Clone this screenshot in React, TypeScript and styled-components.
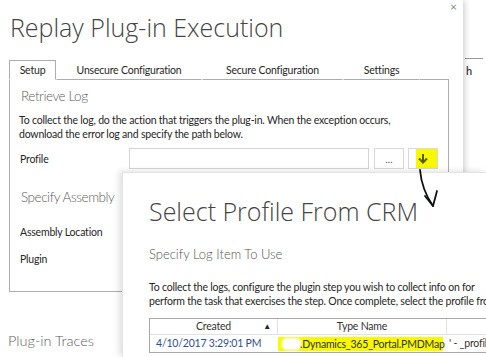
import React from "react";
import styled, { createGlobalStyle } from "styled-components";

const GlobalStyle = createGlobalStyle`
  html, body {
    margin: 0;
    padding: 0;
    background: #ffffff;
  }
  body {
    font-family: "Segoe UI", Lato, "Open Sans", sans-serif;
    color: #262626;
  }
`;

const headingFont = `"Segoe UI Light", "Open Sans", sans-serif`;
const lightFont = `"Segoe UI Light", Lato, sans-serif`;

interface TabDef {
  label: string;
  width: number;
  active?: boolean;
}

const tabs: TabDef[] = [
  { label: "Setup", width: 47, active: true },
  { label: "Unsecure Configuration", width: 146 },
  { label: "Secure Configuration", width: 141 },
  { label: "Settings", width: 77 },
];

export default function App() {
  return (
    <>
      <GlobalStyle />
      <Page>
        <MainDialog>
          <CloseX>×</CloseX>
          <Title>Replay Plug-in Execution</Title>

          <TabStrip>
            {tabs.map((t) => (
              <Tab key={t.label} $width={t.width} $active={t.active}>
                {t.label}
              </Tab>
            ))}
            <TabFiller />
          </TabStrip>

          <Panel>
            <SectionHeading>Retrieve Log</SectionHeading>
            <Paragraph>
              To collect the log, do the action that triggers the plug-in. When the exception occurs,
              <br />
              download the error log and specify the path below.
            </Paragraph>

            <FieldRow $mt={7}>
              <FieldLabel>Profile</FieldLabel>
              <TextBox />
              <SmallButton>...</SmallButton>
              <SmallButton $highlight>
                <DownArrow />
              </SmallButton>
            </FieldRow>

            <SectionHeading $mt={18}>Specify Assembly</SectionHeading>
            <FieldRow $mt={14}>
              <FieldLabel>Assembly Location</FieldLabel>
            </FieldRow>
            <FieldRow $mt={6}>
              <FieldLabel>Plugin</FieldLabel>
            </FieldRow>
          </Panel>

          <TracesHeading>Plug-in Traces</TracesHeading>
        </MainDialog>

        <BackWindow>
          <BackRule />
          <BackText>h</BackText>
        </BackWindow>

        <ProfileDialog>
          <DialogTitle>Select Profile From CRM</DialogTitle>
          <SubHeading>Specify Log Item To Use</SubHeading>
          <DialogText>
            To collect the logs, configure the plugin step you wish to collect info on for
            <br />
            perform the task that exercises the step. Once complete, select the profile from
          </DialogText>

          <Grid>
            <HeaderCell>
              Created
              <SortArrow>▲</SortArrow>
            </HeaderCell>
            <HeaderCell>Type Name</HeaderCell>
            <HeaderCell $last>Entity</HeaderCell>

            <DateCell>4/10/2017 3:29:01 PM</DateCell>
            <Cell>
              <Highlight>
                <Redacted />
                .Dynamics_365_Portal.PMDMap
              </Highlight>
            </Cell>
            <Cell $last>' - _profile</Cell>
          </Grid>
        </ProfileDialog>

        <Scribble width="486" height="357" viewBox="0 0 486 357">
          <path d="M420 170 C 421 181, 424 193, 433 206" />
          <path d="M425 196 L433 206 L437 191" />
        </Scribble>
      </Page>
    </>
  );
}

function DownArrow() {
  return (
    <svg width="10" height="11" viewBox="0 0 10 11">
      <path d="M5 1 V9" stroke="#5a5a00" strokeWidth="2" />
      <path d="M1 5.5 L5 9.5 L9 5.5" stroke="#5a5a00" strokeWidth="2" fill="none" />
    </svg>
  );
}

// --- Styled Components ---
const Page = styled.div`
  position: relative;
  display: flex;
  width: 486px;
  height: 357px;
  overflow: hidden;
  background: #ffffff;
`;

const MainDialog = styled.div`
  position: relative;
  z-index: 1;
  flex: 0 0 463px;
  height: 357px;
  box-sizing: border-box;
  padding-left: 9px;
  background: #ffffff;
  box-shadow: 2px 0 6px rgba(0, 0, 0, 0.18);
`;

const CloseX = styled.div`
  position: absolute;
  left: 450px;
  top: 1px;
  font-size: 12px;
  line-height: 12px;
  color: #8a8a8a;
`;

const Title = styled.h1`
  margin: 10px 0 0 1px;
  font-family: ${headingFont};
  font-size: 25px;
  font-weight: 300;
  line-height: 34px;
  color: #444444;
`;

const TabStrip = styled.div`
  display: flex;
  width: 440px;
  height: 20px;
  margin-top: 16px;
`;

const Tab = styled.div<{ $width: number; $active?: boolean }>`
  flex: 0 0 ${(p) => p.$width}px;
  box-sizing: border-box;
  font-size: 10.5px;
  letter-spacing: -0.2px;
  line-height: 19px;
  text-align: center;
  color: #262626;
  border: 1px solid ${(p) => (p.$active ? "#adadad" : "transparent")};
  border-bottom: 1px solid ${(p) => (p.$active ? "#ffffff" : "#adadad")};
`;

const TabFiller = styled.div`
  flex: 1;
  border-bottom: 1px solid #adadad;
`;

const Panel = styled.div`
  width: 440px;
  height: 212px;
  box-sizing: border-box;
  padding: 0 10px;
  border: 1px solid #adadad;
  border-top: none;
  overflow: hidden;
`;

const SectionHeading = styled.div<{ $mt?: number }>`
  margin: ${(p) => p.$mt ?? 6}px 0 0 1px;
  font-family: ${lightFont};
  font-size: 13.5px;
  font-weight: 300;
  letter-spacing: -0.45px;
  line-height: 20px;
  color: #5e5e5e;
`;

const Paragraph = styled.p`
  margin: 7px 0 0 -1px;
  font-size: 10.5px;
  letter-spacing: -0.2px;
  line-height: 14px;
  color: #262626;
  white-space: nowrap;
`;

const FieldRow = styled.div<{ $mt?: number }>`
  display: flex;
  align-items: center;
  height: 21px;
  margin-top: ${(p) => p.$mt ?? 0}px;
`;

const FieldLabel = styled.div`
  flex: 0 0 109px;
  font-size: 10.5px;
  letter-spacing: -0.2px;
  color: #262626;
`;

const TextBox = styled.div`
  flex: 0 0 240px;
  height: 21px;
  box-sizing: border-box;
  border: 1px solid #d4d4d4;
  background: #ffffff;
`;

const SmallButton = styled.div<{ $highlight?: boolean }>`
  display: flex;
  align-items: center;
  justify-content: center;
  flex: 0 0 30px;
  height: 21px;
  margin-left: ${(p) => (p.$highlight ? 4 : 5)}px;
  box-sizing: border-box;
  border: 1px solid #d9d9d9;
  font-size: 10px;
  color: #555555;
  background: ${(p) =>
    p.$highlight ? "linear-gradient(90deg, #ffffff 0 7px, #f8f800 7px)" : "#ffffff"};
`;

const TracesHeading = styled.div`
  margin: 39px 0 0 -1px;
  font-family: ${lightFont};
  font-size: 14.5px;
  font-weight: 300;
  line-height: 20px;
  color: #5e5e5e;
`;

const BackWindow = styled.div`
  flex: 1;
  padding-top: 58px;
  background: #ffffff;
`;

const BackRule = styled.div`
  width: 18px;
  margin-left: 2px;
  border-top: 1px solid #9a9a9a;
`;

const BackText = styled.div`
  margin: 5px 0 0 3px;
  font-size: 11px;
  font-weight: 600;
  line-height: 14px;
  color: #3a3a3a;
`;

const ProfileDialog = styled.div`
  position: absolute;
  z-index: 2;
  left: 122px;
  top: 172px;
  right: 0;
  bottom: 0;
  box-sizing: border-box;
  padding-left: 26px;
  background: #ffffff;
  border-top: 1px solid #e4e4e4;
  border-left: 1px solid #e4e4e4;
  box-shadow: -3px -1px 6px rgba(0, 0, 0, 0.12);
  overflow: hidden;
`;

const DialogTitle = styled.div`
  margin-top: 22px;
  font-family: ${headingFont};
  font-size: 25px;
  font-weight: 300;
  line-height: 32px;
  color: #444444;
  white-space: nowrap;
`;

const SubHeading = styled.div`
  margin-top: 17px;
  font-family: ${lightFont};
  font-size: 13px;
  font-weight: 300;
  line-height: 20px;
  color: #555555;
  white-space: nowrap;
`;

const DialogText = styled.p`
  margin: 16px 0 0;
  font-size: 10.5px;
  letter-spacing: -0.2px;
  line-height: 14px;
  color: #262626;
  white-space: nowrap;
`;

const Grid = styled.div`
  display: grid;
  grid-template-columns: 128px 169px 120px;
  width: 418px;
  margin-top: 10px;
  border: 1px solid #a8a8a8;
  border-right: none;
  font-size: 10.5px;
  letter-spacing: -0.2px;
`;

const HeaderCell = styled.div<{ $last?: boolean }>`
  position: relative;
  height: 16px;
  line-height: 15px;
  text-align: center;
  color: #333333;
  border-bottom: 1px solid #e2e2e2;
  border-right: ${(p) => (p.$last ? "none" : "1px solid #e2e2e2")};
  box-sizing: border-box;
  white-space: nowrap;
`;

const SortArrow = styled.span`
  position: absolute;
  right: 6px;
  top: 0;
  font-size: 8px;
  color: #222222;
`;

const Cell = styled.div<{ $last?: boolean }>`
  height: 17px;
  padding: ${(p) => (p.$last ? "0 0 0 2px" : "0")};
  line-height: 17px;
  color: #333333;
  white-space: nowrap;
  overflow: hidden;
`;

const DateCell = styled(Cell)`
  padding-left: 6px;
  color: #2b4f8f;
`;

const Highlight = styled.span`
  display: flex;
  align-items: center;
  height: 14px;
  margin: 2px 4px 0 0;
  padding-left: 5px;
  line-height: 14px;
  background: #f8f800;
`;

const Redacted = styled.span`
  display: inline-block;
  flex: 0 0 17px;
  height: 10px;
  border-radius: 4px;
  background: #ffffff;
  box-shadow: 0 0 3px 1px #ffffff;
`;

const Scribble = styled.svg`
  position: absolute;
  z-index: 3;
  left: 0;
  top: 0;
  pointer-events: none;
  fill: none;
  stroke: #111111;
  stroke-width: 1.8;
  stroke-linecap: round;
  stroke-linejoin: round;
`;
